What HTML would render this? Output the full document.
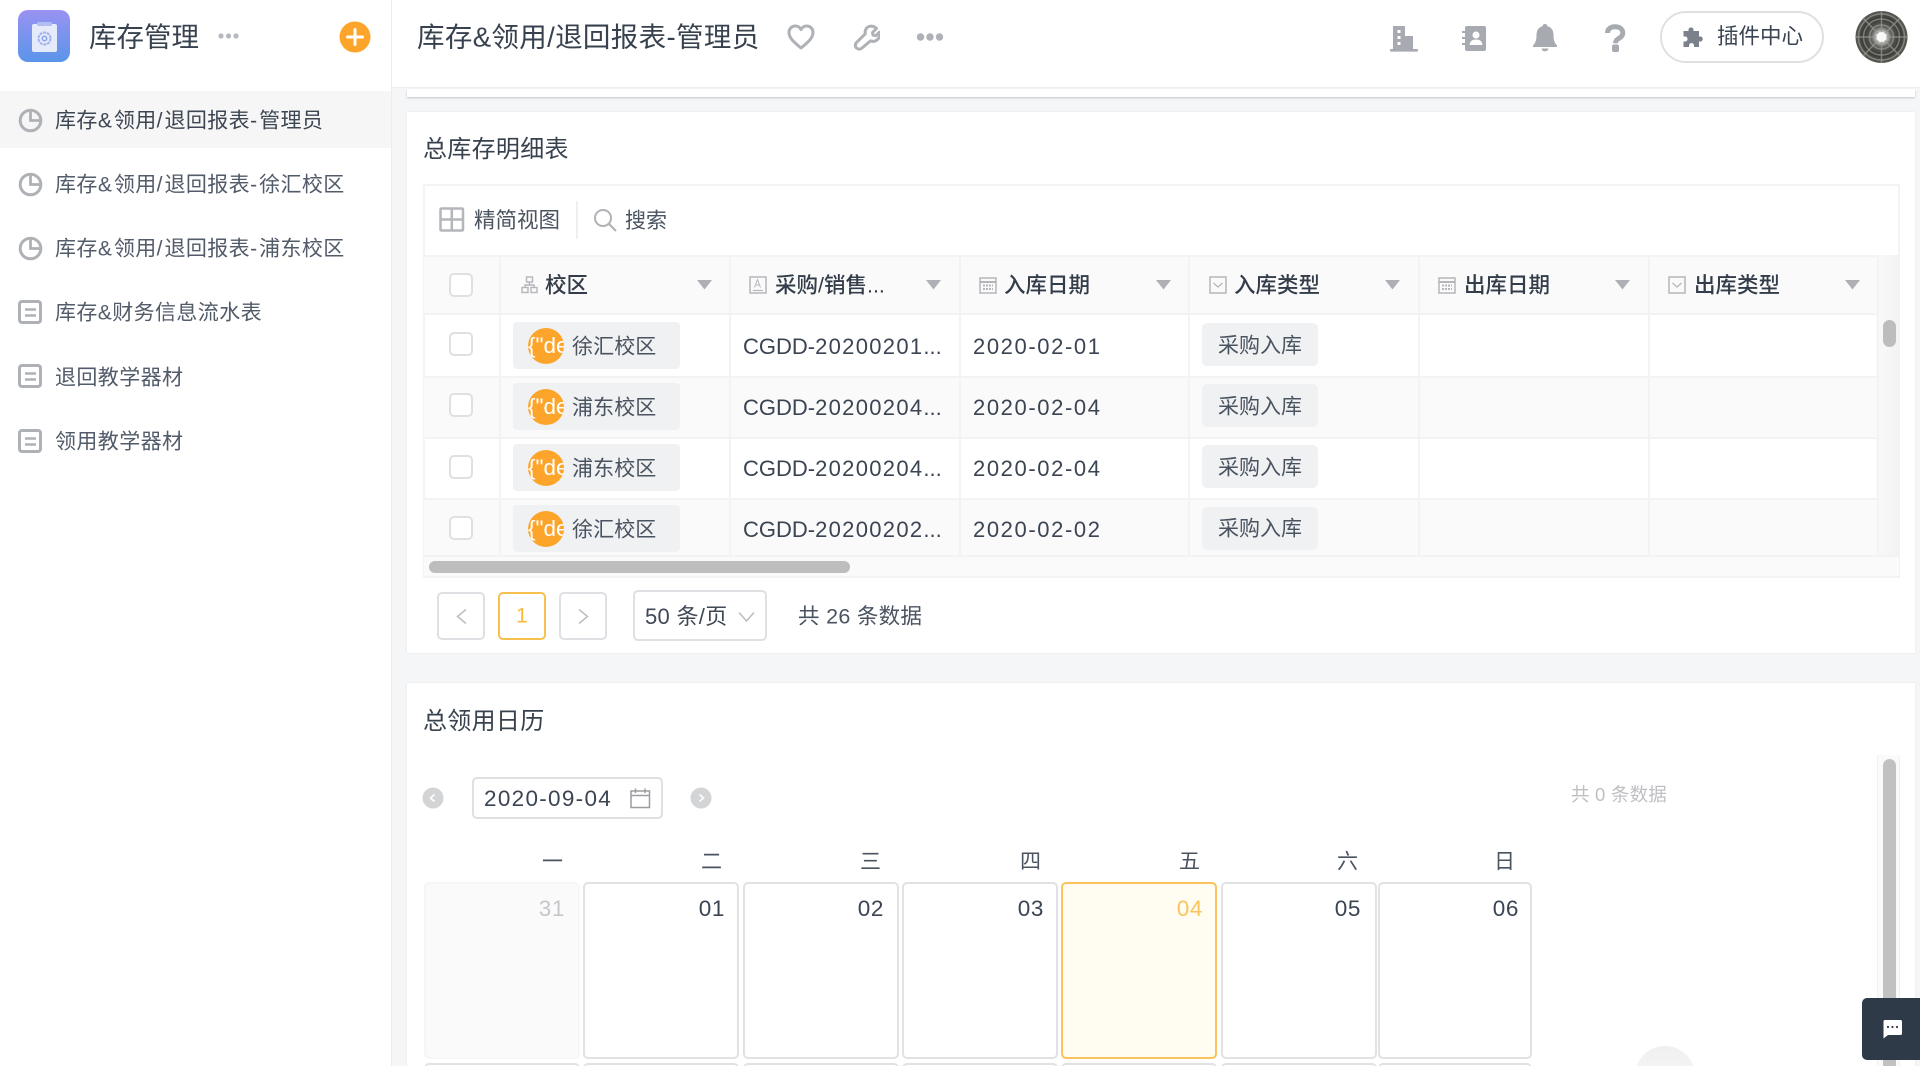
<!DOCTYPE html>
<html lang="zh-CN"><head><meta charset="utf-8"><title>库存管理</title>
<style>
html,body{margin:0;padding:0;width:1920px;height:1066px;overflow:hidden;background:#f5f6f7}
body{font-family:"Liberation Sans","Noto Sans CJK SC",sans-serif;color:#3a4452;position:relative}
div,span,svg{position:absolute;box-sizing:border-box}
em{font-style:normal;letter-spacing:1.3px}
.t{white-space:nowrap;line-height:1;transform:translateY(-50%)}
.r{transform:translate(-100%,-50%)}
.side{font-size:21px;letter-spacing:.4px;left:55px;color:#525b69}
.side em{letter-spacing:2px}
.th{font-size:21.5px;font-weight:500;color:#333c49}
.cb{left:449px;width:24px;height:24px;border:2px solid #dfe0e3;border-radius:5px;background:#fff}
.hl{height:2px;background:#f2f3f4;left:424px;width:1453px}
.vl{width:2px;background:#f2f3f4;top:255px;height:300px}
.tag{left:513px;width:167px;height:47px;background:#f0f1f3;border-radius:4px}
.av{left:15px;top:6px;width:36px;height:36px;border-radius:50%;background:#fda52b;overflow:hidden}
.av span{left:0;top:6px;color:#fff;font-size:22.500px;line-height:24px;white-space:nowrap}
.tagt{font-size:21px;color:#4a5360;left:572px;letter-spacing:.1px}
.code{font-size:22px;left:743px;color:#3a4452}
.date{font-size:22px;left:973px;letter-spacing:1.6px;color:#3a4452}
.tg2{left:1202px;width:116px;height:43px;background:#f0f1f3;border-radius:5px}
.tg2t{left:1218px;font-size:21px;color:#4a5360}
.pg{top:592px;height:48px;width:48px;border:2px solid #dfe0e3;border-radius:5px;background:#fff}
.day{top:882px;height:177px;width:156px;border:2px solid #e1e2e3;border-radius:5px;background:#fff}
.d2{top:1063px;height:40px;width:156px;border:2px solid #e1e2e3;border-radius:5px;background:#fff}
.num{font-size:22.5px;top:909px;letter-spacing:.6px;color:#3a4452}
.wk{font-size:21px;top:862px;color:#4a5360}
</style></head><body>

<!-- sidebar -->
<div style="left:0;top:0;width:392px;height:1066px;background:#fff;border-right:1.5px solid #ebecee"></div>
<div style="left:18px;top:10px;width:52px;height:52px;border-radius:10px;background:linear-gradient(180deg,#9a92f2,#5a95ea)"></div>
<svg style="left:18px;top:10px" width="52" height="52" viewBox="0 0 52 52"><rect x="14" y="14" width="25" height="28" rx="2" fill="#e6ebfb"/><rect x="19" y="12" width="15" height="4" rx="1.5" fill="#b3bdf2"/><circle cx="26.500" cy="28.500" r="6" fill="none" stroke="#9fb2f0" stroke-width="2" stroke-dasharray="3 .8"/><circle cx="26.500" cy="28.500" r="2.200" fill="none" stroke="#8ba2ee" stroke-width="1.500"/></svg>
<span class="t" style="left:89px;top:37px;font-size:27.5px;color:#38424f">库存管理</span>
<svg style="left:218px;top:31px" width="21" height="10"><circle cx="3" cy="5" r="2.600" fill="#b5b8bd"/><circle cx="10.500" cy="5" r="2.600" fill="#b5b8bd"/><circle cx="18" cy="5" r="2.600" fill="#b5b8bd"/></svg>
<svg style="left:339px;top:21px" width="32" height="32"><circle cx="16" cy="16" r="15.500" fill="#fda52b"/><path d="M16 8.500v15M8.500 16h15" stroke="#fff" stroke-width="3" stroke-linecap="round"/></svg>

<div style="left:0;top:91px;width:391px;height:57px;background:#f6f6f7"></div>
<svg style="left:18px;top:108px" width="25" height="25" viewBox="0 0 25 25"><circle cx="12.500" cy="12.500" r="10.300" fill="none" stroke="#aeb1b6" stroke-width="3"/><path d="M12.500 3.500v9h9" fill="none" stroke="#aeb1b6" stroke-width="2.800"/></svg>
<svg style="left:18px;top:172px" width="25" height="25" viewBox="0 0 25 25"><circle cx="12.500" cy="12.500" r="10.300" fill="none" stroke="#aeb1b6" stroke-width="3"/><path d="M12.500 3.500v9h9" fill="none" stroke="#aeb1b6" stroke-width="2.800"/></svg>
<svg style="left:18px;top:236px" width="25" height="25" viewBox="0 0 25 25"><circle cx="12.500" cy="12.500" r="10.300" fill="none" stroke="#aeb1b6" stroke-width="3"/><path d="M12.500 3.500v9h9" fill="none" stroke="#aeb1b6" stroke-width="2.800"/></svg>
<svg style="left:18px;top:300px" width="25" height="25" viewBox="0 0 25 25"><rect x="1.500" y="1.500" width="21" height="21" rx="2.500" fill="none" stroke="#aeb1b6" stroke-width="3"/><path d="M7 9.500h11M7 15.500h11" stroke="#aeb1b6" stroke-width="2.500"/></svg>
<svg style="left:18px;top:364px" width="25" height="25" viewBox="0 0 25 25"><rect x="1.500" y="1.500" width="21" height="21" rx="2.500" fill="none" stroke="#aeb1b6" stroke-width="3"/><path d="M7 9.500h11M7 15.500h11" stroke="#aeb1b6" stroke-width="2.500"/></svg>
<svg style="left:18px;top:429px" width="25" height="25" viewBox="0 0 25 25"><rect x="1.500" y="1.500" width="21" height="21" rx="2.500" fill="none" stroke="#aeb1b6" stroke-width="3"/><path d="M7 9.500h11M7 15.500h11" stroke="#aeb1b6" stroke-width="2.500"/></svg>
<span class="t side" style="top:121px;color:#3d4653">库存<em>&amp;</em>领用<em>/</em>退回报表<em>-</em>管理员</span>
<span class="t side" style="top:185px">库存<em>&amp;</em>领用<em>/</em>退回报表<em>-</em>徐汇校区</span>
<span class="t side" style="top:249px">库存<em>&amp;</em>领用<em>/</em>退回报表<em>-</em>浦东校区</span>
<span class="t side" style="top:313px">库存&amp;财务信息流水表</span>
<span class="t side" style="top:378px">退回教学器材</span>
<span class="t side" style="top:442px">领用教学器材</span>

<!-- top bar -->
<div style="left:392px;top:0;width:1528px;height:88px;background:#fff;border-bottom:1.5px solid #eeeff0"></div>
<span class="t" style="left:417px;top:37px;font-size:27.5px;letter-spacing:.35px;color:#38424f">库存&amp;领用/退回报表-管理员</span>
<svg style="left:787px;top:23px" width="28" height="28" viewBox="0 0 28 28"><path d="M14 25C6 18.500 2 14.500 2 9.500 2 5.500 5 3 8.200 3 10.600 3 12.800 4.300 14 6.500 15.200 4.300 17.400 3 19.800 3 23 3 26 5.500 26 9.500 26 14.500 22 18.500 14 25z" fill="none" stroke="#aeb1b6" stroke-width="3" stroke-linejoin="round"/></svg>
<svg style="left:853px;top:23px" width="27" height="28" viewBox="0 0 27 28"><path d="M16 3.500c3-1 6 .3 7.500 2l-4 4 .5 2.700 2.800.5 3.500-3.500c.7 3 0 5.800-2 7.500-2 1.800-4.500 2-6.800 1.200L9 25c-1.500 1.500-4 1.500-5.500 0s-1.500-4 0-5.500l8.800-8.700c-.8-3 .8-6.300 3.700-7.300z" fill="none" stroke="#aeb1b6" stroke-width="3" stroke-linejoin="round"/></svg>
<svg style="left:916px;top:31px" width="28" height="12"><circle cx="4.500" cy="6" r="3.700" fill="#aeb1b6"/><circle cx="14" cy="6" r="3.700" fill="#aeb1b6"/><circle cx="23.500" cy="6" r="3.700" fill="#aeb1b6"/></svg>

<svg style="left:1390px;top:24px" width="28" height="28" viewBox="0 0 28 28"><path d="M3 2h12v10h8v13H3z" fill="#a7abb1"/><rect y="25" width="28" height="2.600" rx="1" fill="#a7abb1"/><rect x="7.500" y="6" width="3" height="3" fill="#fff"/><rect x="7.500" y="12" width="3" height="3" fill="#fff"/><rect x="7.500" y="18" width="3" height="3" fill="#fff"/></svg>
<svg style="left:1462px;top:25px" width="24" height="27" viewBox="0 0 24 27"><path d="M3 3a2 2 0 0 1 2-2h17a2 2 0 0 1 2 2v21a2 2 0 0 1-2 2H5a2 2 0 0 1-2-2z" fill="#a7abb1"/><path d="M0 6h6v2H0zM0 12h6v2H0zM0 18h6v2H0z" fill="#a7abb1"/><circle cx="14" cy="10" r="3.500" fill="#fff"/><path d="M7.500 20c.5-4 3-5.500 6.500-5.500s6 1.500 6.500 5.500z" fill="#fff"/></svg>
<svg style="left:1532px;top:23px" width="26" height="29" viewBox="0 0 26 29"><path d="M13 1c1.500 0 2.400 1 2.500 2.300C20 4.500 21.500 8 21.500 12c0 5 1 8 3.500 10.500v1.500H1v-1.500C3.500 20 4.500 17 4.500 12c0-4 1.500-7.500 6-8.700C10.600 2 11.500 1 13 1z" fill="#a7abb1"/><path d="M9.500 25.500h7c-.4 1.800-1.700 2.800-3.500 2.800s-3.100-1-3.500-2.800z" fill="#a7abb1"/></svg>
<svg style="left:1604px;top:24px" width="22" height="28" viewBox="0 0 22 28"><path d="M3.500 9C3.500 5 6.500 2.800 11 2.800S18.800 5 18.800 9c0 3-2 4.300-3.800 5.300-2 1.100-3.500 2.200-3.500 5" fill="none" stroke="#a7abb1" stroke-width="5"/><rect x="8" y="20.500" width="7" height="7.500" rx="2" fill="#a7abb1"/></svg>

<div style="left:1660px;top:11px;width:164px;height:52px;border:2px solid #dfe0e3;border-radius:26px;background:#fff"></div>
<svg style="left:1682px;top:26px" width="23" height="23" viewBox="0 0 23 23"><path d="M9 1.500c1.500 0 2.500 1 2.500 2.300V5h5.500v5.500h1.200c1.500 0 2.500 1 2.500 2.500s-1 2.500-2.500 2.500H17V21h-5v-1.500c0-1.400-1-2.400-2.500-2.400S7 18.100 7 19.500V21H1.500v-5.500H3c1.500 0 2.500-1 2.500-2.500S4.500 10.500 3 10.500H1.500V5H6.500V3.800C6.500 2.500 7.500 1.500 9 1.500z" fill="#7b818a"/></svg>
<span class="t" style="left:1717px;top:37px;font-size:21.500px;color:#3a4452">插件中心</span>
<svg style="left:1855px;top:10px" width="53" height="54" viewBox="0 0 53 54"><defs><radialGradient id="g"><stop offset="0" stop-color="#fff"/><stop offset=".18" stop-color="#cfcfcc"/><stop offset=".4" stop-color="#5e5e5a"/><stop offset=".7" stop-color="#383836"/><stop offset="1" stop-color="#5a5b54"/></radialGradient></defs><circle cx="26.500" cy="27" r="26" fill="url(#g)"/><g fill="none" stroke="#9a9a94" stroke-opacity=".7" stroke-width="1.500"><circle cx="26.500" cy="27" r="12"/><circle cx="26.500" cy="27" r="18"/><circle cx="26.500" cy="27" r="23"/><path d="M26.500 1v52M1 27h51M8 8l37 38M45 8L8 46"/></g><circle cx="26.500" cy="27" r="5" fill="#fff" fill-opacity=".9"/></svg>

<!-- previous card strip -->
<div style="left:407px;top:89px;width:1508px;height:8px;background:#fff;box-shadow:0 1px 2px rgba(0,0,0,.2)"></div>

<!-- card 1 -->
<div style="left:407px;top:112px;width:1508px;height:541px;background:#fff;box-shadow:0 0 2px rgba(0,0,0,.08)"></div>
<span class="t" style="left:423px;top:150px;font-size:24px;letter-spacing:.3px;color:#38424f">总库存明细表</span>
<div style="left:423px;top:184px;width:1477px;height:394px;border:2px solid #f2f3f4"></div>

<svg style="left:439px;top:207px" width="26" height="25"><rect x="1.500" y="1.500" width="22.500" height="22" fill="none" stroke="#b4b6bb" stroke-width="2.500" rx="1"/><path d="M12.800 2v21M2 12.500h22" stroke="#b4b6bb" stroke-width="2.500"/></svg>
<span class="t" style="left:474px;top:221px;font-size:21.500px;color:#4a5360">精简视图</span>
<div style="left:576px;top:201px;width:1.500px;height:38px;background:#eeeff0"></div>
<svg style="left:593px;top:208px" width="24" height="24" viewBox="0 0 24 24"><circle cx="10" cy="10" r="8" fill="none" stroke="#b0b2b7" stroke-width="2"/><path d="M16 16l7 7" stroke="#b0b2b7" stroke-width="2.200"/></svg>
<span class="t" style="left:625px;top:221px;font-size:21px;color:#4a5360">搜索</span>

<!-- table -->
<div style="left:424px;top:255px;width:1475px;height:60px;background:#fafafa;border-top:2px solid #f2f3f4;border-bottom:2px solid #f2f3f4"></div>
<div style="left:1876px;top:255px;width:24px;height:323px;background:linear-gradient(90deg,#fafafa,#f2f2f3)"></div>
<div style="left:424px;top:376px;width:1453px;height:61px;background:#fafafa"></div>
<div style="left:424px;top:498px;width:1453px;height:57px;background:#fafafa"></div>
<div class="hl" style="top:376px"></div><div class="hl" style="top:437px"></div><div class="hl" style="top:498px"></div>
<div style="left:424px;top:555px;width:1475px;height:23px;background:#fafafa;border-top:2px solid #f2f3f4;border-bottom:2px solid #f2f3f4"></div>
<div class="vl" style="left:499px"></div><div class="vl" style="left:729px"></div><div class="vl" style="left:959px"></div><div class="vl" style="left:1188px"></div><div class="vl" style="left:1418px"></div><div class="vl" style="left:1648px"></div><div class="vl" style="left:1877px"></div>
<div style="left:429px;top:561px;width:421px;height:12px;background:#bdbdbd;border-radius:6px"></div>
<div style="left:1883px;top:320px;width:13px;height:27px;background:#bdbdbd;border-radius:6.500px"></div>

<div class="cb" style="top:273px"></div>
<svg style="left:521px;top:276px" width="17" height="18" viewBox="0 0 17 18"><g fill="none" stroke="#b4b6bb" stroke-width="1.400"><rect x="5.500" y="1" width="6" height="5"/><rect x="1" y="11.500" width="6" height="5"/><rect x="10" y="11.500" width="6" height="5"/><path d="M8.500 6v3M4 11.500V9h9v2.500"/></g></svg>
<span class="t th" style="left:545px;top:286px">校区</span>
<svg style="left:749px;top:276px" width="18" height="18" viewBox="0 0 18 18"><rect x="1" y="1" width="16" height="16" fill="none" stroke="#b4b6bb" stroke-width="1.500"/><path d="M4 14.500h10" stroke="#b4b6bb" stroke-width="1.200"/><path d="M5.500 11.500l3-8 3 8M6.500 9h4" fill="none" stroke="#b4b6bb" stroke-width="1"/></svg>
<span class="t th" style="left:775px;top:286px">采购/销售...</span>
<svg style="left:979px;top:276px" width="18" height="18" viewBox="0 0 18 18"><rect x="1" y="2" width="16" height="15" fill="none" stroke="#b4b6bb" stroke-width="1.500"/><path d="M1 6h16" stroke="#b4b6bb" stroke-width="2"/><path d="M4 9.500h10M4 13h10" stroke="#b4b6bb" stroke-width="2" stroke-dasharray="2 1"/></svg>
<span class="t th" style="left:1004px;top:286px">入库日期</span>
<svg style="left:1209px;top:276px" width="18" height="18" viewBox="0 0 18 18"><rect x="1" y="1" width="16" height="16" fill="none" stroke="#b4b6bb" stroke-width="1.500"/><path d="M4.500 7l4.500 4 4.500-4" fill="none" stroke="#b4b6bb" stroke-width="1.300"/></svg>
<span class="t th" style="left:1234px;top:286px">入库类型</span>
<svg style="left:1438px;top:276px" width="18" height="18" viewBox="0 0 18 18"><rect x="1" y="2" width="16" height="15" fill="none" stroke="#b4b6bb" stroke-width="1.500"/><path d="M1 6h16" stroke="#b4b6bb" stroke-width="2"/><path d="M4 9.500h10M4 13h10" stroke="#b4b6bb" stroke-width="2" stroke-dasharray="2 1"/></svg>
<span class="t th" style="left:1464px;top:286px">出库日期</span>
<svg style="left:1668px;top:276px" width="18" height="18" viewBox="0 0 18 18"><rect x="1" y="1" width="16" height="16" fill="none" stroke="#b4b6bb" stroke-width="1.500"/><path d="M4.500 7l4.500 4 4.500-4" fill="none" stroke="#b4b6bb" stroke-width="1.300"/></svg>
<span class="t th" style="left:1694px;top:286px">出库类型</span>
<svg style="left:697px;top:280px" width="15" height="10"><path d="M0 0h15L7.500 9.500z" fill="#aeb0b6"/></svg>
<svg style="left:926px;top:280px" width="15" height="10"><path d="M0 0h15L7.500 9.500z" fill="#aeb0b6"/></svg>
<svg style="left:1156px;top:280px" width="15" height="10"><path d="M0 0h15L7.500 9.500z" fill="#aeb0b6"/></svg>
<svg style="left:1385px;top:280px" width="15" height="10"><path d="M0 0h15L7.500 9.500z" fill="#aeb0b6"/></svg>
<svg style="left:1615px;top:280px" width="15" height="10"><path d="M0 0h15L7.500 9.500z" fill="#aeb0b6"/></svg>
<svg style="left:1845px;top:280px" width="15" height="10"><path d="M0 0h15L7.500 9.500z" fill="#aeb0b6"/></svg>

<!-- rows -->
<div class="cb" style="top:332px"></div>
<div class="tag" style="top:322px"><div class="av"><span>{"de</span></div></div>
<span class="t tagt" style="top:347px">徐汇校区</span>
<span class="t code" style="top:347px">CGDD-<em>20200201</em>...</span>
<span class="t date" style="top:347px">2020-02-01</span>
<div class="tg2" style="top:323px"></div><span class="t tg2t" style="top:346px">采购入库</span>

<div class="cb" style="top:393px"></div>
<div class="tag" style="top:383px"><div class="av"><span>{"de</span></div></div>
<span class="t tagt" style="top:408px">浦东校区</span>
<span class="t code" style="top:408px">CGDD-<em>20200204</em>...</span>
<span class="t date" style="top:408px">2020-02-04</span>
<div class="tg2" style="top:384px"></div><span class="t tg2t" style="top:407px">采购入库</span>

<div class="cb" style="top:455px"></div>
<div class="tag" style="top:444px"><div class="av"><span>{"de</span></div></div>
<span class="t tagt" style="top:469px">浦东校区</span>
<span class="t code" style="top:469px">CGDD-<em>20200204</em>...</span>
<span class="t date" style="top:469px">2020-02-04</span>
<div class="tg2" style="top:445px"></div><span class="t tg2t" style="top:468px">采购入库</span>

<div class="cb" style="top:516px"></div>
<div class="tag" style="top:505px"><div class="av"><span>{"de</span></div></div>
<span class="t tagt" style="top:530px">徐汇校区</span>
<span class="t code" style="top:530px">CGDD-<em>20200202</em>...</span>
<span class="t date" style="top:530px">2020-02-02</span>
<div class="tg2" style="top:507px"></div><span class="t tg2t" style="top:529px">采购入库</span>

<!-- pagination -->
<div class="pg" style="left:437px"></div>
<svg style="left:455px;top:608px" width="13" height="17"><path d="M11 1.500L2.500 8.500 11 15.500" fill="none" stroke="#bbbdc1" stroke-width="1.500"/></svg>
<div class="pg" style="left:498px;border-color:#f8c14f"></div>
<span class="t" style="left:516px;top:616px;font-size:21px;color:#f8b93c">1</span>
<div class="pg" style="left:559px"></div>
<svg style="left:577px;top:608px" width="13" height="17"><path d="M2 1.500L10.500 8.500 2 15.500" fill="none" stroke="#bbbdc1" stroke-width="1.500"/></svg>
<div style="left:633px;top:590px;width:134px;height:51px;border:2px solid #dfe0e3;border-radius:5px;background:#fff"></div>
<span class="t" style="left:645px;top:617px;font-size:22px;letter-spacing:.3px;color:#3f4855">50 条/页</span>
<svg style="left:738px;top:611px" width="17" height="12"><path d="M1 1.500L8.500 10 16 1.500" fill="none" stroke="#bbbdc1" stroke-width="1.500"/></svg>
<span class="t" style="left:798px;top:617px;font-size:21.500px;letter-spacing:.3px;color:#4a5360">共 26 条数据</span>

<!-- card 2 -->
<div style="left:407px;top:683px;width:1508px;height:383px;background:#fff;box-shadow:0 0 2px rgba(0,0,0,.08)"></div>
<span class="t" style="left:423px;top:722px;font-size:24px;letter-spacing:.3px;color:#38424f">总领用日历</span>

<svg style="left:422px;top:787px" width="22" height="22"><circle cx="11" cy="11" r="10.500" fill="#d3d4d6"/><path d="M12.500 7.500L8.500 11l4 3.500" fill="none" stroke="#fff" stroke-width="1.500"/></svg>
<div style="left:472px;top:777px;width:191px;height:42px;border:2px solid #dfe0e3;border-radius:5px;background:#fff"></div>
<span class="t" style="left:484px;top:799px;font-size:22.500px;letter-spacing:1.3px;color:#3a4452">2020-09-04</span>
<svg style="left:630px;top:788px" width="21" height="21" viewBox="0 0 21 21"><rect x="1" y="3" width="18.500" height="16.500" fill="none" stroke="#9a9da2" stroke-width="1.500"/><path d="M1 7.500h18.500" stroke="#9a9da2" stroke-width="1.500"/><path d="M5.500 0.500v4.500M15 0.500v4.500" stroke="#9a9da2" stroke-width="1.500"/></svg>
<svg style="left:690px;top:787px" width="22" height="22"><circle cx="11" cy="11" r="10.500" fill="#d3d4d6"/><path d="M9.500 7.500l4 3.500-4 3.500" fill="none" stroke="#fff" stroke-width="1.500"/></svg>
<span class="t" style="left:1571px;top:795px;font-size:18.500px;letter-spacing:.2px;color:#bdbfc3">共 0 条数据</span>

<span class="t r wk" style="left:563px">一</span>
<span class="t r wk" style="left:722px">二</span>
<span class="t r wk" style="left:881px">三</span>
<span class="t r wk" style="left:1041px">四</span>
<span class="t r wk" style="left:1200px">五</span>
<span class="t r wk" style="left:1358px">六</span>
<span class="t r wk" style="left:1515px">日</span>

<div class="day" style="left:424px;background:#fafafa;border-color:#f6f6f7"></div>
<div class="day" style="left:583px"></div>
<div class="day" style="left:743px"></div>
<div class="day" style="left:902px"></div>
<div class="day" style="left:1061px;border-color:#fbc35b;background:#fffdf1"></div>
<div class="day" style="left:1221px"></div>
<div class="day" style="left:1378px;width:154px"></div>
<span class="t r num" style="left:565px;color:#c6c7ca">31</span>
<span class="t r num" style="left:725px">01</span>
<span class="t r num" style="left:884px">02</span>
<span class="t r num" style="left:1044px">03</span>
<span class="t r num" style="left:1203px;color:#fbc35b">04</span>
<span class="t r num" style="left:1361px">05</span>
<span class="t r num" style="left:1519px">06</span>

<div class="d2" style="left:424px"></div><div class="d2" style="left:583px"></div><div class="d2" style="left:743px"></div><div class="d2" style="left:902px"></div><div class="d2" style="left:1061px"></div><div class="d2" style="left:1221px"></div><div class="d2" style="left:1378px;width:154px"></div>

<div style="left:1635px;top:1046px;width:60px;height:60px;border-radius:50%;background:linear-gradient(180deg,#f0f0f1,#fafafa)"></div>
<div style="left:1877px;top:755px;width:23px;height:311px;background:#fafafa;border-left:1.5px solid #f0f1f2;border-right:1.5px solid #f0f1f2"></div>
<div style="left:1883px;top:759px;width:13px;height:307px;background:#c1c1c1;border-radius:6.500px 6.500px 0 0"></div>

<div style="left:1862px;top:998px;width:58px;height:62px;background:#2e3a48;border-radius:5px 0 0 5px"></div>
<svg style="left:1882px;top:1019px" width="21" height="20" viewBox="0 0 21 20"><path d="M2.500 1h16A1.500 1.500 0 0 1 20 2.500v12a1.500 1.500 0 0 1-1.500 1.500H6l-4.500 3.500V2.500A1.500 1.500 0 0 1 2.500 1z" fill="#fff"/><circle cx="6" cy="8" r="1.100" fill="#2e3a48"/><circle cx="10.500" cy="8" r="1.100" fill="#2e3a48"/><circle cx="15" cy="8" r="1.100" fill="#2e3a48"/></svg>

</body></html>
